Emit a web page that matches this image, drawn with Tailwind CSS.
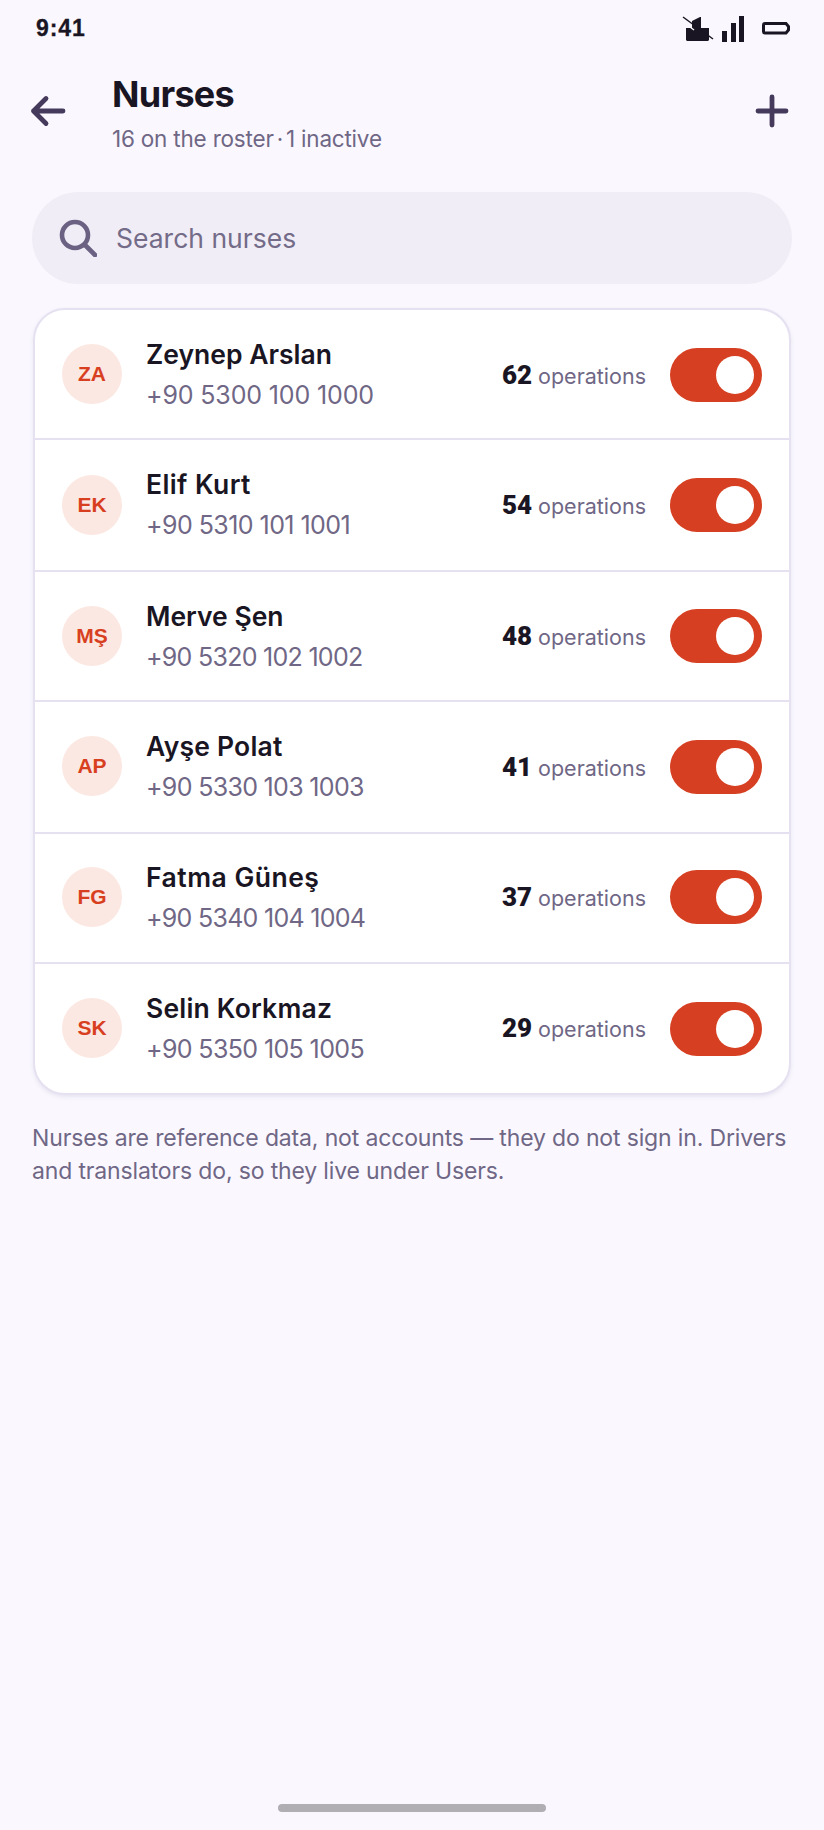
<!DOCTYPE html>
<html lang="en">
<head>
    <meta charset="UTF-8">
    <meta name="viewport" content="width=device-width, initial-scale=1.0">
    <title>Nurses</title>
    <script src="https://cdn.jsdelivr.net/npm/@tailwindcss/browser@4"></script>
</head>
<body class="bg-[#faf8fe] font-['Inter',sans-serif] text-[#1a1523]">
<div class="relative w-[824px] h-[1830px] overflow-hidden">
    <!-- status bar -->
    <div class="h-[56px] pl-[36px] pr-[30px] flex items-center justify-between">
        <span class="font-['Liberation_Sans',sans-serif] font-bold text-[23px] leading-none tracking-[0.9px] [-webkit-text-stroke:0.3px_#1a1523]">9:41</span>
        <svg class="w-[110px] h-[30px] overflow-visible" viewBox="0 0 110 30" fill="#1a1523">
            <path d="M8 8 16 4h1v11h8v12l-1 1H3l-1-1V15h6z"/>
            <path d="M-2 8 10 17" stroke="#faf8fe" stroke-width="1.4"/>
            <path d="M-1 4 29 26" stroke="#1a1523" stroke-width="1.5"/>
            <rect x="38" y="18" width="5" height="11"/>
            <rect x="47" y="10" width="5" height="19"/>
            <rect x="55" y="3" width="5" height="26"/>
            <path d="M79.5 12a1.5 1.5 0 0 1 1.5-1.500h21l2.500 3v3.500l-2.500 3H81a1.500 1.500 0 0 1-1.500-1.500z" fill="none" stroke="#1a1523" stroke-width="3"/>
        </svg>
    </div>

    <!-- header -->
    <div class="h-[112px] pl-[30px] pr-[35px] flex items-center">
        <svg class="w-[36px] h-[32px] mt-[-2px]" viewBox="0 0 36 32" fill="none" stroke="#453a5c" stroke-width="4.800" stroke-linecap="round" stroke-linejoin="round">
            <path d="M33 16H3.500M16 3.500 3.500 16 16 28.500"/>
        </svg>
        <div class="ml-[46px] flex-1 mt-[3px]">
            <h1 class="text-[36px] leading-[40px] font-bold tracking-[-0.7px]">Nurses</h1>
            <p class="text-[22.500px] leading-[30px] mt-[10px] tracking-[-0.2px] text-[#6f6785]">16 on the roster<span class="mx-[3px]">·</span>1 inactive</p>
        </div>
        <svg class="w-[34px] h-[34px] mt-[-2px]" viewBox="0 0 34 34" fill="none" stroke="#453a5c" stroke-width="4.800" stroke-linecap="round">
            <path d="M17 3v28M3 17h28"/>
        </svg>
    </div>

    <!-- search -->
    <div class="mx-[32px] mt-[24px] h-[92px] rounded-[46px] bg-[#f0edf6] flex items-center pl-[27px]">
        <svg class="w-[38px] h-[38px]" viewBox="0 0 38 38" fill="none" stroke="#6b6183" stroke-width="4.600" stroke-linecap="round">
            <circle cx="16" cy="16" r="13"/>
            <path d="M26 26l10 10"/>
        </svg>
        <span class="ml-[19px] mt-[2px] text-[26.500px] text-[#736b88]">Search nurses</span>
    </div>

    <!-- nurses list -->
    <div class="mx-[33px] mt-[24px] bg-white border-2 border-[#e6e1f1] rounded-[32px] shadow-[0_2px_4px_rgba(70,50,120,0.1)] overflow-hidden">
        <div class="h-[130px] pl-[27px] pr-[27px] pt-[2px] flex items-center border-b-2 border-[#e6e1f1]">
            <div class="w-[60px] h-[60px] mt-[-2px] rounded-full bg-[#fce8e2] flex items-center justify-center font-['Liberation_Sans',sans-serif] font-bold text-[21px] text-[#d83f21]">ZA</div>
            <div class="ml-[24px] flex-1 mt-[-2px]">
                <div class="text-[26.500px] leading-[36px] font-semibold">Zeynep Arslan</div>
                <div class="text-[25px] leading-[36px] mt-[5px] tracking-[-0.14px] text-[#6f6785]">+90 5300 100 1000</div>
            </div>
            <span class="font-['Roboto',sans-serif] font-black text-[26px]">62</span>
            <span class="ml-[6px] mt-[2px] text-[21.500px] text-[#6f6785]">operations</span>
            <div class="ml-[24px] w-[92px] h-[54px] rounded-full bg-[#d63f21] flex items-center justify-end pr-[8px]"><div class="w-[38px] h-[38px] rounded-full bg-white"></div></div>
        </div>
        <div class="h-[132px] pl-[27px] pr-[27px] flex items-center border-b-2 border-[#e6e1f1]">
            <div class="w-[60px] h-[60px] rounded-full bg-[#fce8e2] flex items-center justify-center font-['Liberation_Sans',sans-serif] font-bold text-[21px] text-[#d83f21]">EK</div>
            <div class="ml-[24px] flex-1 mt-[-2px]">
                <div class="text-[26.500px] leading-[36px] font-semibold tracking-[0.4px]">Elif Kurt</div>
                <div class="text-[25px] leading-[36px] mt-[5px] tracking-[-0.55px] text-[#6f6785]">+90 5310 101 1001</div>
            </div>
            <span class="font-['Roboto',sans-serif] font-black text-[26px]">54</span>
            <span class="ml-[6px] mt-[2px] text-[21.500px] text-[#6f6785]">operations</span>
            <div class="ml-[24px] w-[92px] h-[54px] rounded-full bg-[#d63f21] flex items-center justify-end pr-[8px]"><div class="w-[38px] h-[38px] rounded-full bg-white"></div></div>
        </div>
        <div class="h-[130px] pl-[27px] pr-[27px] flex items-center border-b-2 border-[#e6e1f1]">
            <div class="w-[60px] h-[60px] rounded-full bg-[#fce8e2] flex items-center justify-center font-['Liberation_Sans',sans-serif] font-bold text-[21px] text-[#d83f21]">MŞ</div>
            <div class="ml-[24px] flex-1">
                <div class="text-[26.500px] leading-[36px] font-semibold">Merve Şen</div>
                <div class="text-[25px] leading-[36px] mt-[5px] tracking-[-0.72px] text-[#6f6785]">+90 5320 102 1002</div>
            </div>
            <span class="font-['Roboto',sans-serif] font-black text-[26px]">48</span>
            <span class="ml-[6px] mt-[2px] text-[21.500px] text-[#6f6785]">operations</span>
            <div class="ml-[24px] w-[92px] h-[54px] rounded-full bg-[#d63f21] flex items-center justify-end pr-[8px]"><div class="w-[38px] h-[38px] rounded-full bg-white"></div></div>
        </div>
        <div class="h-[132px] pl-[27px] pr-[27px] flex items-center border-b-2 border-[#e6e1f1]">
            <div class="w-[60px] h-[60px] mt-[-2px] rounded-full bg-[#fce8e2] flex items-center justify-center font-['Liberation_Sans',sans-serif] font-bold text-[21px] text-[#d83f21]">AP</div>
            <div class="ml-[24px] flex-1 mt-[-2px]">
                <div class="text-[26.500px] leading-[36px] font-semibold tracking-[0.2px]">Ayşe Polat</div>
                <div class="text-[25px] leading-[36px] mt-[5px] tracking-[-0.68px] text-[#6f6785]">+90 5330 103 1003</div>
            </div>
            <span class="font-['Roboto',sans-serif] font-black text-[26px]">41</span>
            <span class="ml-[6px] mt-[2px] text-[21.500px] text-[#6f6785]">operations</span>
            <div class="ml-[24px] w-[92px] h-[54px] rounded-full bg-[#d63f21] flex items-center justify-end pr-[8px]"><div class="w-[38px] h-[38px] rounded-full bg-white"></div></div>
        </div>
        <div class="h-[130px] pl-[27px] pr-[27px] pb-[2px] flex items-center border-b-2 border-[#e6e1f1]">
            <div class="w-[60px] h-[60px] rounded-full bg-[#fce8e2] flex items-center justify-center font-['Liberation_Sans',sans-serif] font-bold text-[21px] text-[#d83f21]">FG</div>
            <div class="ml-[24px] flex-1">
                <div class="text-[26.500px] leading-[36px] font-semibold tracking-[0.5px]">Fatma Güneş</div>
                <div class="text-[25px] leading-[36px] mt-[5px] tracking-[-0.72px] text-[#6f6785]">+90 5340 104 1004</div>
            </div>
            <span class="font-['Roboto',sans-serif] font-black text-[26px]">37</span>
            <span class="ml-[6px] mt-[2px] text-[21.500px] text-[#6f6785]">operations</span>
            <div class="ml-[24px] w-[92px] h-[54px] rounded-full bg-[#d63f21] flex items-center justify-end pr-[8px]"><div class="w-[38px] h-[38px] rounded-full bg-white"></div></div>
        </div>
        <div class="h-[129px] pl-[27px] pr-[27px] flex items-center">
            <div class="w-[60px] h-[60px] mt-[-2px] rounded-full bg-[#fce8e2] flex items-center justify-center font-['Liberation_Sans',sans-serif] font-bold text-[21px] text-[#d83f21]">SK</div>
            <div class="ml-[24px] flex-1">
                <div class="text-[26.500px] leading-[36px] font-semibold tracking-[0.2px]">Selin Korkmaz</div>
                <div class="text-[25px] leading-[36px] mt-[5px] tracking-[-0.62px] text-[#6f6785]">+90 5350 105 1005</div>
            </div>
            <span class="font-['Roboto',sans-serif] font-black text-[26px]">29</span>
            <span class="ml-[6px] mt-[2px] text-[21.500px] text-[#6f6785]">operations</span>
            <div class="ml-[24px] w-[92px] h-[54px] rounded-full bg-[#d63f21] flex items-center justify-end pr-[8px]"><div class="w-[38px] h-[38px] rounded-full bg-white"></div></div>
        </div>
    </div>

    <p class="mx-[32px] mt-[27px] text-[23px] leading-[33px] tracking-[-0.15px] text-[#6f6785]">Nurses are reference data, not accounts — they do not sign in. Drivers and translators do, so they live under Users.</p>

    <!-- home indicator -->
    <div class="absolute left-[278px] bottom-[18px] w-[268px] h-[8px] rounded-[4px] bg-[#b0aeb3]"></div>
</div>
</body>
</html>
